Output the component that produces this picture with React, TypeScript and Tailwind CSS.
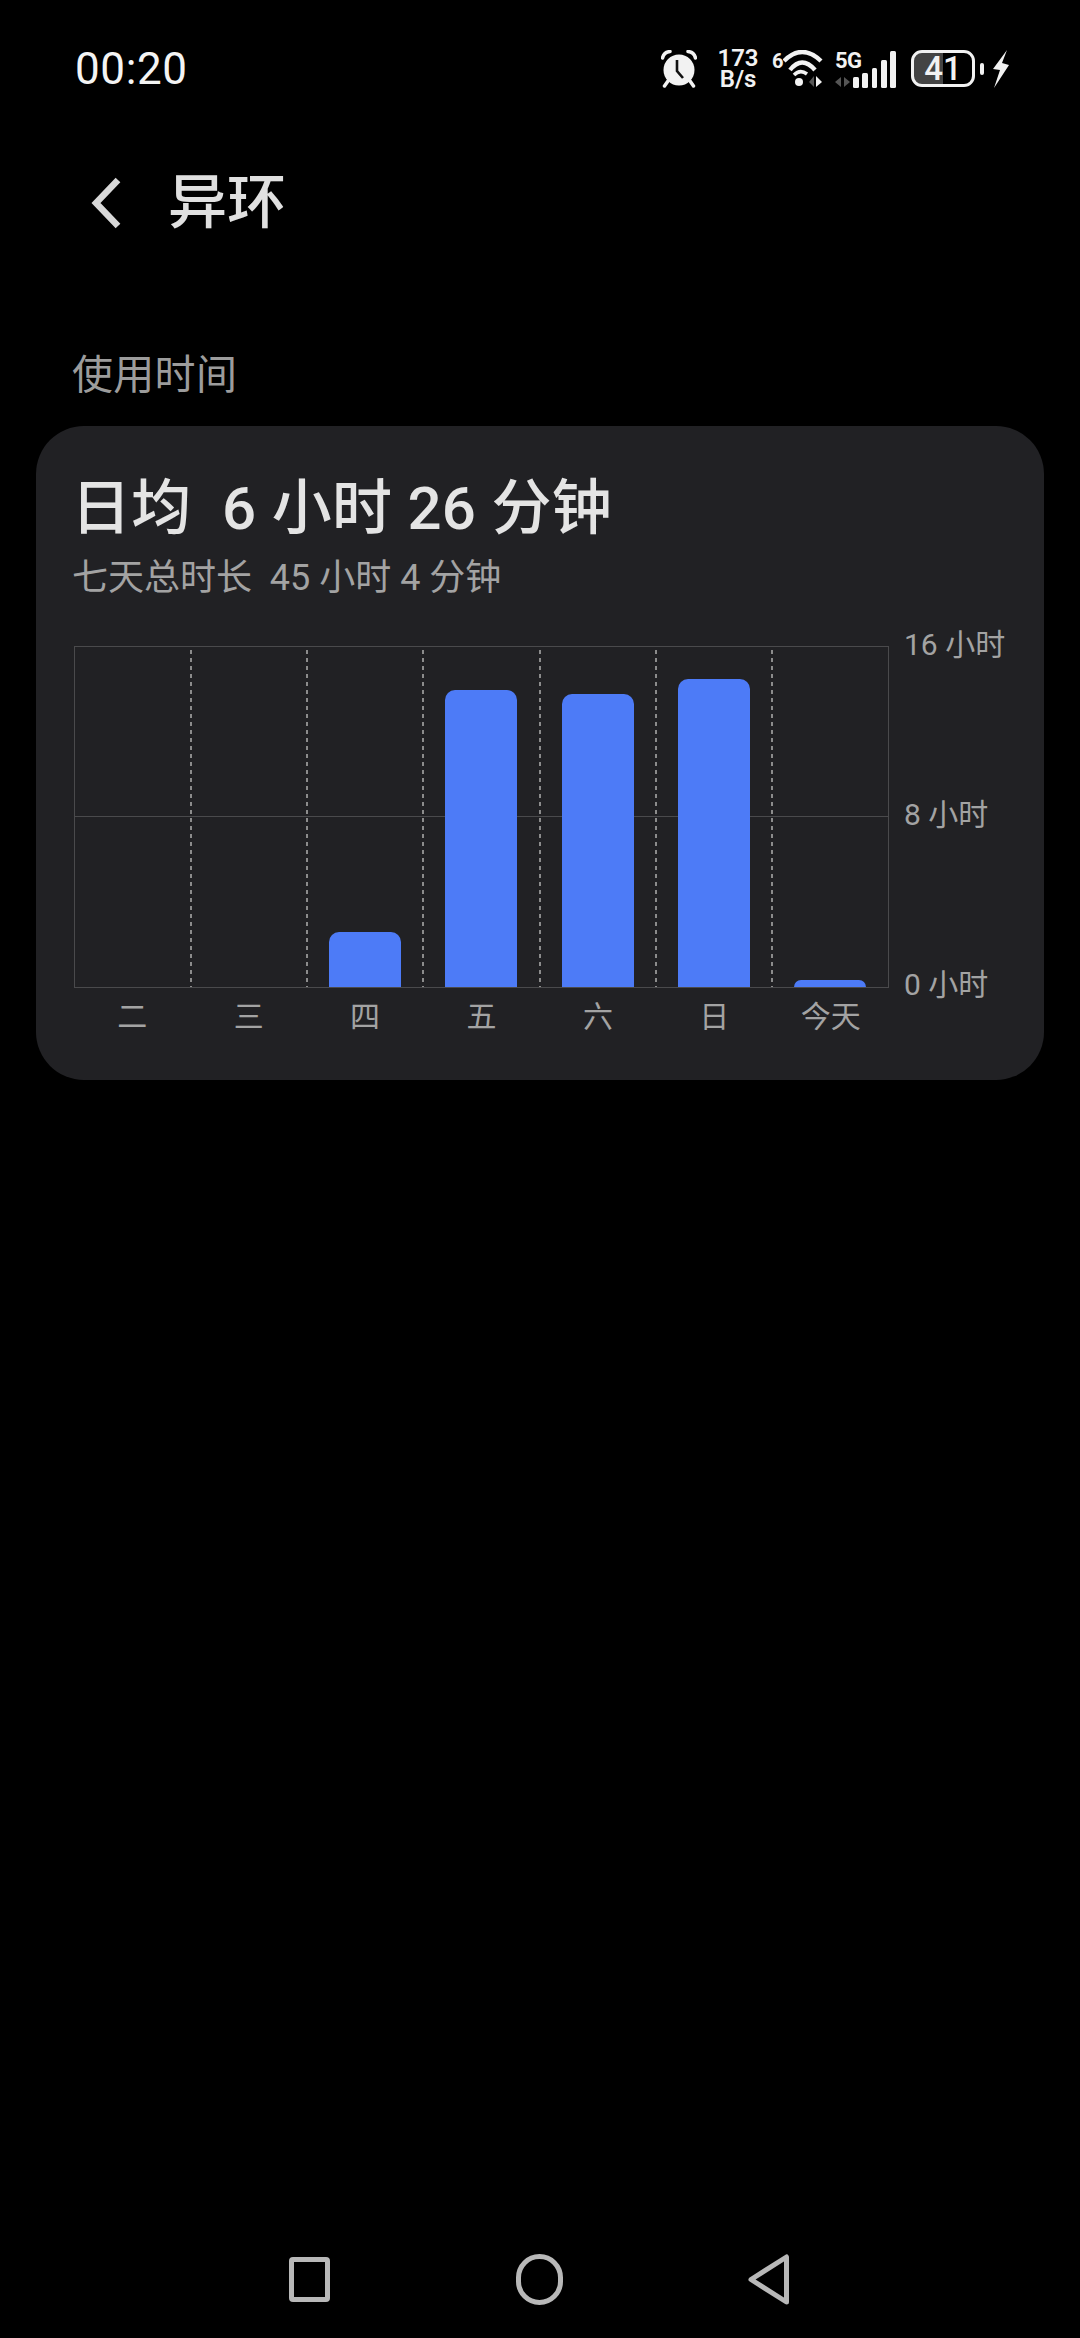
const days = [
  { label: "二", height: 0 },
  { label: "三", height: 0 },
  { label: "四", height: 55 },
  { label: "五", height: 297 },
  { label: "六", height: 293 },
  { label: "日", height: 308 },
  { label: "今天", height: 7 },
];

function AlarmIcon() {
  return (
    <svg width="36" height="38" viewBox="0 0 36 38" className="shrink-0">
      <circle cx="18" cy="20" r="15.5" fill="#f2f2f2" />
      <path d="M1.5 8 Q3 2 9 1.5" stroke="#f2f2f2" strokeWidth="3.5" fill="none" strokeLinecap="round" />
      <path d="M34.5 8 Q33 2 27 1.5" stroke="#f2f2f2" strokeWidth="3.5" fill="none" strokeLinecap="round" />
      <path d="M7 31 L3.5 36 M29 31 L32.5 36" stroke="#f2f2f2" strokeWidth="3.5" strokeLinecap="round" />
      <path d="M16 10 V21 L22 28" stroke="#111" strokeWidth="2.6" fill="none" />
    </svg>
  );
}

function WifiIcon() {
  return (
    <svg width="40" height="38" viewBox="0 0 40 38" className="shrink-0">
      <path d="M1 11 Q19 -7 38 11" stroke="#f2f2f2" strokeWidth="4.4" fill="none" />
      <path d="M7 20 Q19 5 32 20" stroke="#f2f2f2" strokeWidth="4.4" fill="none" />
      <path d="M11 25 Q17 19 24 24" stroke="#f2f2f2" strokeWidth="3.6" fill="none" />
      <circle cx="16" cy="32" r="4" fill="#f2f2f2" />
      <path d="M31 26 V37 L26 32 Z" fill="#555" />
      <path d="M33 26 V37 L39 32 Z" fill="#f2f2f2" />
    </svg>
  );
}

function SignalIcon() {
  return (
    <svg width="61" height="38" viewBox="0 0 61 38" className="shrink-0">
      <path d="M6 27 V37 L0 32 Z" fill="#555" />
      <path d="M9 27 V37 L15 32 Z" fill="#555" />
      <rect x="18" y="27" width="6" height="11" rx="1.5" fill="#f2f2f2" />
      <rect x="27" y="23" width="6" height="15" rx="1.5" fill="#f2f2f2" />
      <rect x="37" y="18" width="5" height="20" rx="1.5" fill="#f2f2f2" />
      <rect x="46" y="10" width="6" height="28" rx="1.5" fill="#f2f2f2" />
      <rect x="55" y="1" width="6" height="37" rx="1.5" fill="#f2f2f2" />
    </svg>
  );
}

function BoltIcon() {
  return (
    <svg width="16" height="38" viewBox="0 0 16 38" className="shrink-0">
      <path d="M14 0 L0 19 L7 20 L1 38 L16 15 L9 13 Z" fill="#f2f2f2" />
    </svg>
  );
}

function StatusBar() {
  return (
    <div className="flex h-[105px] items-center justify-between pt-[32px] pr-[71px] pl-[75px]">
      <span className="text-[44px] leading-[44px] tracking-[0.6px] text-[#f4f4f4]">00:20</span>
      <div className="flex items-center text-[#f2f2f2]">
        <AlarmIcon />
        <div className="ml-[19px] flex w-[44px] flex-col items-center text-[24px] leading-[21px] font-semibold">
          <span>173</span>
          <span>B/s</span>
        </div>
        <span className="mb-[16px] ml-[12px] w-[11px] text-[20px] leading-[20px] font-bold">6</span>
        <WifiIcon />
        <div className="relative ml-[12px] flex h-[38px] w-[61px] items-start">
          <span className="text-[22px] leading-[22px] font-bold tracking-tight">5G</span>
          <div className="absolute right-0 bottom-0">
            <SignalIcon />
          </div>
        </div>
        <div className="ml-[15px] flex h-[37px] w-[64px] items-center justify-center rounded-[11px] border-[3px] border-[#f2f2f2] bg-[linear-gradient(90deg,#444_0,#444_50%,#000_50%)] text-[33px] leading-[31px] font-medium">
          41
        </div>
        <div className="ml-[5px] h-[12px] w-[4px] rounded-[2px] bg-[#f2f2f2]" />
        <div className="ml-[9px]">
          <BoltIcon />
        </div>
      </div>
    </div>
  );
}

function DayColumn({ height, last }: { height: number; last: boolean }) {
  return (
    <div className="relative flex items-end justify-center">
      {height > 0 && <div className="relative z-10 w-[72px] rounded-t-[10px] bg-[#4d7bf7]" style={{ height }} />}
      {!last && (
        <div className="absolute top-[3px] -right-px bottom-0 w-[2px] bg-[repeating-linear-gradient(180deg,#8c8c8c_0,#8c8c8c_4px,transparent_4px,transparent_8px)]" />
      )}
    </div>
  );
}

function Chart() {
  return (
    <div className="mt-[46px] flex">
      <div className="w-[815px] shrink-0">
        <div className="relative grid h-[342px] grid-cols-7 border border-[#4a4a4c]">
          <div className="absolute top-[169px] right-0 left-0 h-px bg-[#4a4a4c]" />
          {days.map((d, i) => (
            <DayColumn key={d.label} height={d.height} last={i === days.length - 1} />
          ))}
        </div>
        <div className="mt-[11px] grid grid-cols-7 text-center text-[30px] leading-[36px] text-[#a3a3a3]">
          {days.map((d) => (
            <span key={d.label}>{d.label}</span>
          ))}
        </div>
      </div>
      <div className="ml-[15px] flex h-[342px] flex-col justify-between text-[30px] leading-[36px] text-[#a3a3a3]">
        <span className="-mt-[19px]">16 小时</span>
        <span>8 小时</span>
        <span className="-mb-[15px]">0 小时</span>
      </div>
    </div>
  );
}

export default function App() {
  return (
    <div className="flex h-[2338px] w-[1080px] flex-col bg-black font-['Roboto','Noto_Sans_CJK_SC',sans-serif]">
      <StatusBar />
      <div className="mt-[60px] flex h-[76px] items-center pl-[88px]">
        <svg width="34" height="56" viewBox="0 0 34 56" className="shrink-0">
          <path d="M30 5 L8 28 L30 51" stroke="#d8d8d8" strokeWidth="6.5" fill="none" />
        </svg>
        <h1 className="ml-[46px] text-[59px] leading-[76px] font-medium text-[#e0e0e0]">异环</h1>
      </div>
      <p className="mt-[109px] pl-[72px] text-[41px] leading-[50px] tracking-[0.3px] text-[#9c9c9c]">使用时间</p>
      <section className="mx-[36px] mt-[26px] h-[654px] rounded-[48px] bg-[#212124] pt-[50px] pl-[38px]">
        <h2 className="-ml-[3px] text-[60px] leading-[66px] font-medium tracking-[0.3px] whitespace-pre text-[#e4e4e4]">日均  6 小时 26 分钟</h2>
        <p className="mt-[14px] -ml-[2px] text-[36px] leading-[44px] whitespace-pre text-[#a3a3a3]">七天总时长  45 小时 4 分钟</p>
        <Chart />
      </section>
      <div className="mt-auto mb-[33px] flex h-[52px] items-center pl-[289px]">
        <div className="h-[45px] w-[41px] rounded-[4px] border-[5px] border-[#b8b8b8]" />
        <div className="ml-[186px] h-[51px] w-[47px] rounded-full border-[5px] border-[#b8b8b8]" />
        <svg width="41" height="51" viewBox="0 0 41 51" className="ml-[185px] shrink-0">
          <path d="M3 25.5 L38.5 3 V48 Z" stroke="#b8b8b8" strokeWidth="5" strokeLinejoin="round" fill="none" />
        </svg>
      </div>
    </div>
  );
}
